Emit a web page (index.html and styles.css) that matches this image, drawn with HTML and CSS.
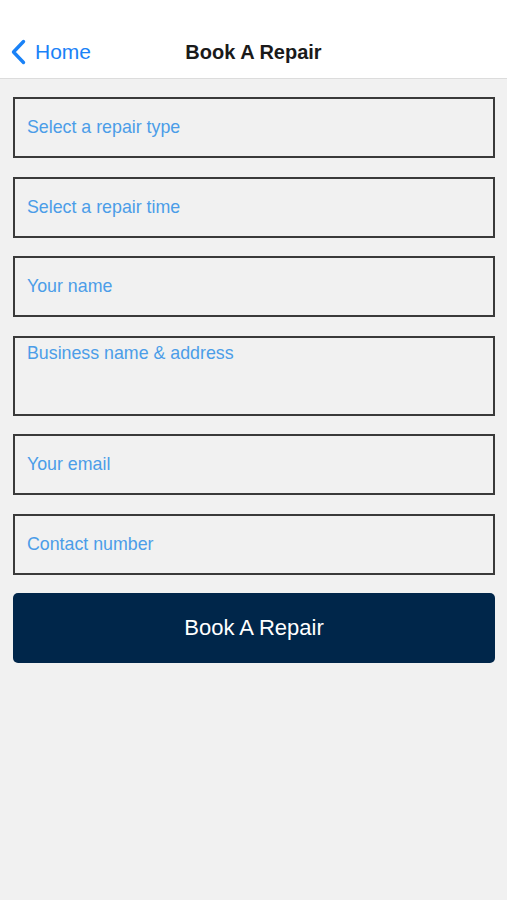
FILE: index.html
```html
<!DOCTYPE html>
<html lang="en">
<head>
<meta charset="utf-8">
<title>Book A Repair</title>
<link rel="stylesheet" href="styles.css">
</head>
<body>
<header class="navbar">
  <a class="back" href="#">
    <svg class="chevron" width="17" height="26" viewBox="0 0 17 26"><path d="M13.5 2.5 L3.5 13 L13.5 23.5" fill="none" stroke="#1a82f7" stroke-width="3.4" stroke-linecap="round" stroke-linejoin="round"/></svg>
    <span>Home</span>
  </a>
  <h1 class="title">Book A Repair</h1>
</header>
<main class="form">
  <div class="field"><span class="ph">Select a repair type</span></div>
  <div class="field"><span class="ph">Select a repair time</span></div>
  <div class="field"><span class="ph">Your name</span></div>
  <div class="field field-area"><span class="ph">Business name &amp; address</span></div>
  <div class="field"><span class="ph">Your email</span></div>
  <div class="field"><span class="ph">Contact number</span></div>
  <button class="submit" type="button">Book A Repair</button>
</main>
</body>
</html>
```
FILE: styles.css
```css
* { box-sizing: border-box; }
html, body { margin: 0; padding: 0; }
body {
  width: 507px;
  height: 900px;
  background: #f1f1f1;
  font-family: "Liberation Sans", Arial, sans-serif;
  overflow: hidden;
}
.navbar {
  position: relative;
  height: 79px;
  background: #ffffff;
  border-bottom: 1px solid #dcdcdc;
  display: flex;
  align-items: center;
  justify-content: center;
  padding-top: 26px;
}
.back {
  position: absolute;
  left: 10px;
  top: 39px;
  display: flex;
  align-items: center;
  gap: 8px;
  color: #1a82f7;
  text-decoration: none;
  font-size: 21px;
}
.chevron { display: block; }
.title {
  margin: 0;
  font-size: 20px;
  font-weight: 600;
  color: #1a1a1a;
}
.form {
  padding: 18px 12px 0 13px;
  display: flex;
  flex-direction: column;
  gap: 18.5px;
}
.field {
  height: 61px;
  border: 2px solid #3a3a3a;
  display: flex;
  align-items: center;
  padding: 0 12px;
}
.field-area {
  height: 80px;
  align-items: flex-start;
  padding-top: 5px;
}
.ph {
  color: #4b9de8;
  font-size: 17.8px;
}
.submit {
  height: 70px;
  border: 0;
  border-radius: 5px;
  background: #00264a;
  color: #ffffff;
  font-family: inherit;
  font-size: 22px;
  cursor: pointer;
}
```
